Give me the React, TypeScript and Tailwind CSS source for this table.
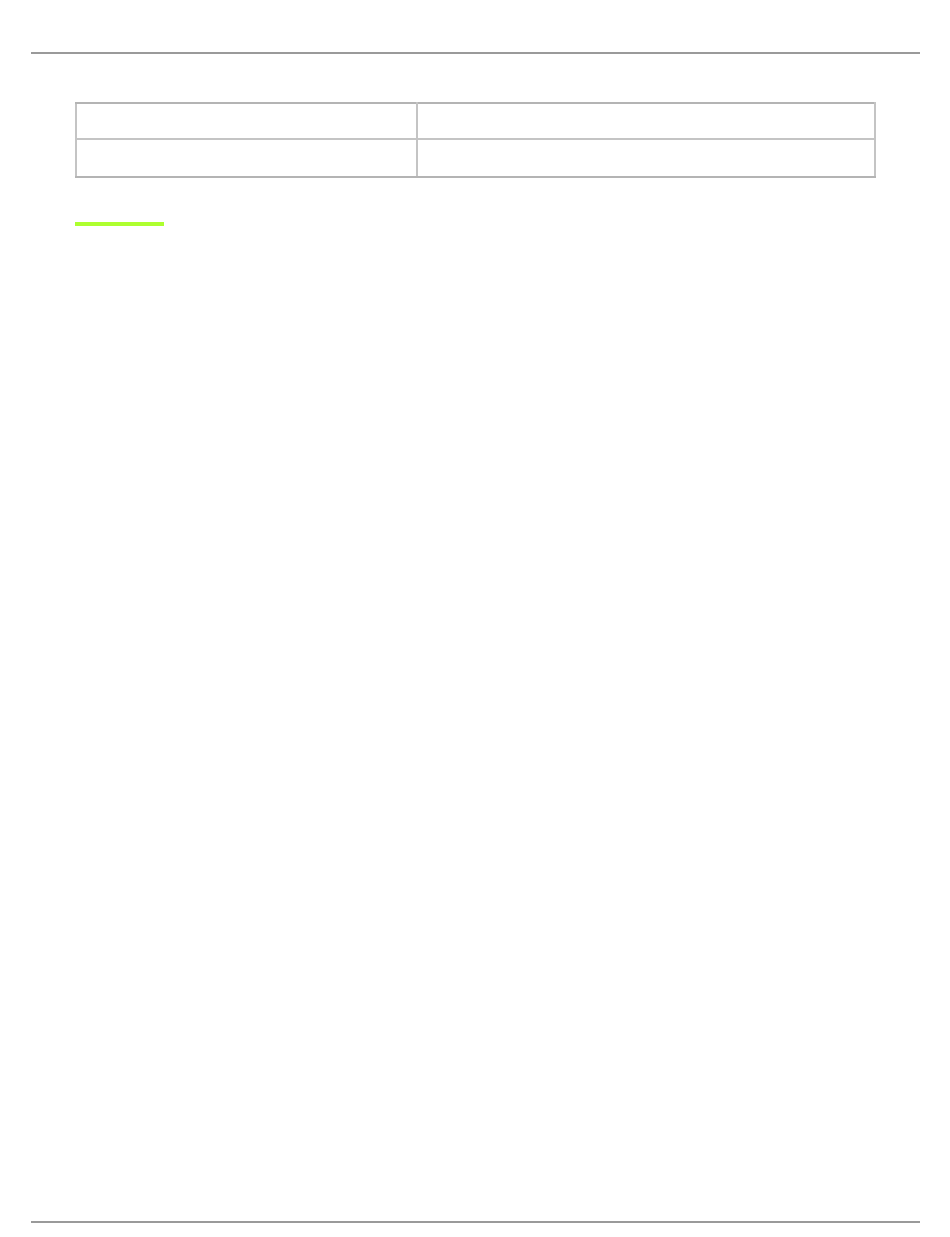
export default function App() {
  return (
    <div className="w-[950px] h-[1237px] bg-white flex flex-col" style={{ fontFamily: '"Liberation Sans", Arial, sans-serif' }}>
      <div className="pt-[52px] px-[31px] pr-[30px]">
        <div className="h-[2px] bg-[#9a9a9a]" />
      </div>
      <div className="pl-[75px] pt-[48px]">
        <table className="w-[801px] border-collapse">
          <tbody>
            <tr className="h-[36px]">
              <td className="w-[341px] border-2 border-[#c4c4c4] border-t-[#b4b4b4]"></td>
              <td className="border-2 border-[#c4c4c4] border-t-[#b4b4b4]"></td>
            </tr>
            <tr className="h-[38px]">
              <td className="w-[341px] border-2 border-[#c4c4c4] border-b-[#b4b4b4]"></td>
              <td className="border-2 border-[#c4c4c4] border-b-[#b4b4b4]"></td>
            </tr>
          </tbody>
        </table>
        <div className="mt-[44px] w-[89px] h-[4px] bg-[#adff2f]" />
      </div>
      <div className="flex-1" />
      <div className="px-[31px] pr-[30px] pb-[14px]">
        <div className="h-[2px] bg-[#9a9a9a]" />
      </div>
    </div>
  );
}
